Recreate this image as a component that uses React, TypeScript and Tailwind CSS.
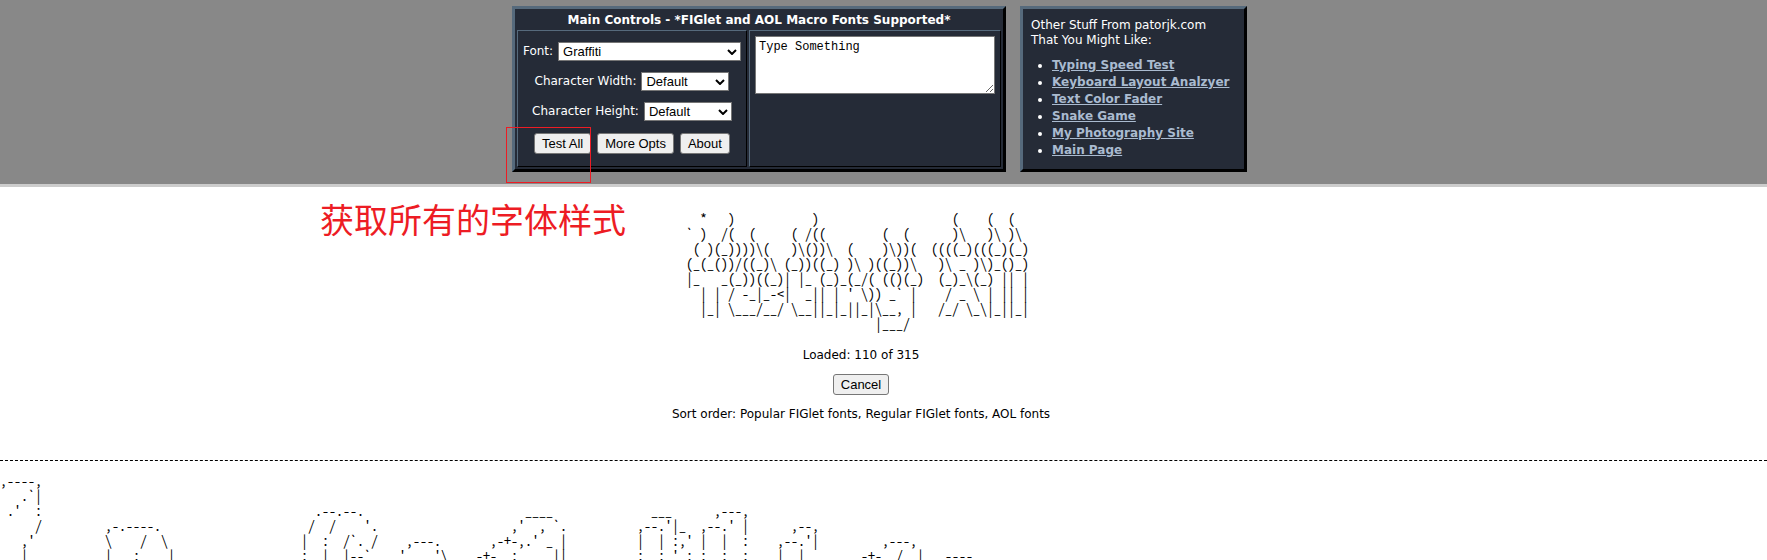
import type { ReactNode } from 'react';

type Segment = [column: number, text: string];

const place = (segments: Segment[]) =>
  segments.reduce((line, [column, text]) => line.padEnd(column) + text, '');

const titleArt = [
  "  *   )           )                   (    (  (   ",
  "` )  /(  (     ( /((        (  (      )\\   )\\ )\\  ",
  " ( )(_))))\\(   )\\())\\  (    )\\))(  ((((_)(((_)(_) ",
  "(_(_())/((_)\\ (_))((_) )\\ )((_))\\   )\\ _ )\\)_()_) ",
  "|_   _(_))((_)| |_ (_)_(_/( (()(_)  (_)_\\(_) || | ",
  "  | | / -_|_-<|  _|| | ' \\)) _` |    / _ \\ | || | ",
  "  |_| \\___/__/ \\__||_|_||_|\\__, |   /_/ \\_\\|_||_| ",
  "                           |___/                  ",
].join('\n');

const sampleRows: Segment[][] = [
  [[0, ',----,']],
  [[3, '.`|']],
  [[1, ".'"], [5, ':'], [45, '.--.--.'], [75, '____'], [93, '___'], [102, ',---,']],
  [
    [5, '/'], [15, ',-.----.'], [44, '/'], [47, '/'], [52, "'."], [73, ",'"], [77, ','], [79, '`.'],
    [91, ",--.'|_"], [100, ",--.'"], [106, '|'], [113, ',--,'],
  ],
  [
    [3, ",'"], [15, '\\'], [20, '/'], [23, '\\'], [43, '|'], [46, ':'], [49, '/`.'], [53, '/'],
    [58, ',---.'], [70, ",-+-,.'"], [78, '_'], [80, '|'], [91, '|'], [94, '|'], [96, ":,'"],
    [100, '|'], [103, '|'], [106, ':'], [111, ",--.'|"], [126, ',---,'],
  ],
  [
    [3, '|'], [15, '|'], [19, ':'], [24, '|'], [43, ':'], [46, '|'], [49, '|--`'], [57, "'"],
    [62, "'\\"], [68, '-+-'], [73, ':'], [79, '||'], [91, ':'], [94, ':'], [96, "'"], [98, ':'],
    [100, ':'], [103, ':'], [106, ':'], [111, '|'], [114, '|'], [123, '-+-'], [128, '/'],
    [131, '|'], [135, '----'],
  ],
];

const sampleArt = sampleRows.map(place).join('\n');

const links = [
  'Typing Speed Test',
  'Keyboard Layout Analzyer',
  'Text Color Fader',
  'Snake Game',
  'My Photography Site',
  'Main Page',
];

const mono =
  "font-['Noto_Sans_Mono_CJK_SC','Noto_Sans_CJK_SC',monospace] [font-feature-settings:'hwid'] text-[14px] leading-[15px] text-black";

function Button({ children }: { children: ReactNode }) {
  return (
    <button
      type="button"
      className="h-[21px] rounded-[3px] border border-[#767676] bg-[#efefef] px-[7px] font-['Liberation_Sans',sans-serif] text-[13px] leading-[17px] text-black"
    >
      {children}
    </button>
  );
}

function Select({ id, label, value, width }: { id: string; label: string; value: string; width: string }) {
  return (
    <div className="flex items-center justify-center gap-[5px]">
      <label htmlFor={id}>{label}</label>
      <span className={`relative ${width}`}>
        <select
          id={id}
          className="block h-[19px] w-full appearance-none border border-[#767676] bg-white pl-1 font-['Liberation_Sans',sans-serif] text-[13px] leading-[17px] text-black"
        >
          <option>{value}</option>
        </select>
        <svg viewBox="0 0 10 6" className="pointer-events-none absolute top-[7px] right-[4px] h-[6px] w-[10px]">
          <path d="M1 1l4 4 4-4" fill="none" stroke="#000" strokeWidth="2" />
        </svg>
      </span>
    </div>
  );
}

export default function App() {
  return (
    <div className="h-screen overflow-hidden bg-white font-['DejaVu_Sans',sans-serif] text-[12px] leading-[15px] text-black">
      <header className="flex items-start justify-center gap-[14px] border-b-[3px] border-[#cccccc] bg-[#888888] pt-[6px] pr-2 pb-[12px] text-white">
        <section className="flex h-[166px] w-[494px] flex-col border-[3px] border-t-[#566a7c] border-r-black border-b-black border-l-[#566a7c] bg-[#252b37] p-[2px]">
          <h1 className="h-[19px] text-center font-bold leading-[18px]">
            Main Controls - *FIGlet and AOL Macro Fonts Supported*
          </h1>
          <div className="flex flex-1 gap-[2px]">
            <div className="relative flex w-[230px] flex-col border border-t-[#566a7c] border-r-black border-b-black border-l-[#566a7c] pt-[11px]">
              <div className="flex flex-col gap-[11px]">
                <Select id="font" label="Font:" value="Graffiti" width="w-[183px]" />
                <Select id="char-width" label="Character Width:" value="Default" width="w-[88px]" />
                <Select id="char-height" label="Character Height:" value="Default" width="w-[88px]" />
              </div>
              <div className="mt-[12px] flex justify-center gap-[6px]">
                <Button>Test All</Button>
                <Button>More Opts</Button>
                <Button>About</Button>
              </div>
              <div className="pointer-events-none absolute top-[96px] left-[-12px] h-[56px] w-[85px] border border-[#ed1c24]" />
            </div>
            <div className="flex-1 border border-t-[#566a7c] border-r-black border-b-black border-l-[#566a7c] p-[5px]">
              <textarea
                aria-label="Text"
                defaultValue="Type Something"
                className="block h-[58px] w-full border border-[#767676] bg-white px-[3px] py-[3px] font-['Liberation_Mono',monospace] text-[12px] leading-[15px] text-black"
              />
            </div>
          </div>
        </section>
        <aside className="h-[166px] w-[227px] border-[3px] border-t-[#566a7c] border-r-black border-b-black border-l-[#566a7c] bg-[#252b37] px-[8px] py-[9px]">
          <p>
            Other Stuff From patorjk.com
            <br />
            That You Might Like:
          </p>
          <ul className="mt-[9px] list-disc pl-[21px] leading-[17px]">
            {links.map((link) => (
              <li key={link}>
                <a href="#" className="font-bold text-[#aabbd0] underline">
                  {link}
                </a>
              </li>
            ))}
          </ul>
        </aside>
      </header>
      <main>
        <div className="relative flex flex-col items-center pt-[24px] pr-[45px]">
          <p className="absolute top-[12px] left-[320px] font-['Noto_Sans_CJK_SC',sans-serif] text-[34px] leading-[40px] text-[#ed1c24]">
            获取所有的字体样式
          </p>
          <pre className={mono}>{titleArt}</pre>
          <p className="mt-[17px]">Loaded: 110 of 315</p>
          <div className="my-[11px]">
            <Button>Cancel</Button>
          </div>
          <p className="mt-[1px]">Sort order: Popular FIGlet fonts, Regular FIGlet fonts, AOL fonts</p>
        </div>
        <hr className="mt-[38px] mb-[12px] border-t border-dashed border-black" />
        <pre className={mono}>{sampleArt}</pre>
      </main>
    </div>
  );
}
